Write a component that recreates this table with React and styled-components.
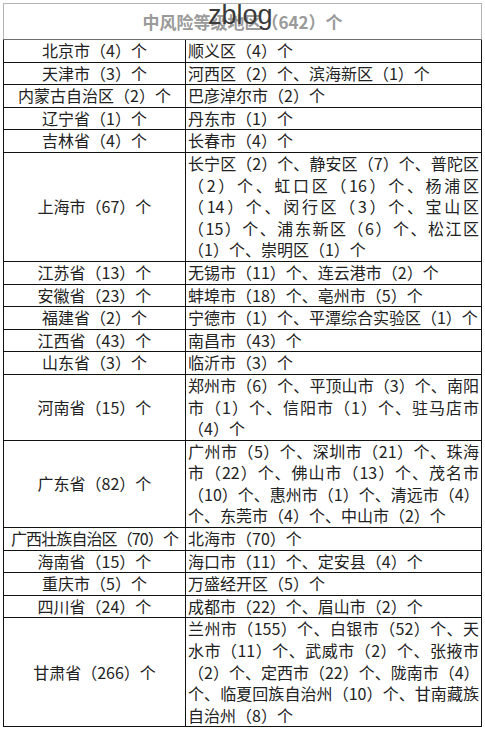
import React from 'react';
import styled, { createGlobalStyle } from 'styled-components';

const List = [
  { name: '北京市（4）个', areas: ['顺义区（4）个'] },
  { name: '天津市（3）个', areas: ['河西区（2）个、滨海新区（1）个'] },
  { name: '内蒙古自治区（2）个', areas: ['巴彦淖尔市（2）个'] },
  { name: '辽宁省（1）个', areas: ['丹东市（1）个'] },
  { name: '吉林省（4）个', areas: ['长春市（4）个'] },
  {
    name: '上海市（67）个',
    areas: [
      '长宁区（2）个、静安区（7）个、普陀区',
      '（2）个、虹口区（16）个、杨浦区',
      '（14）个、闵行区（3）个、宝山区',
      '（15）个、浦东新区（6）个、松江区',
      '（1）个、崇明区（1）个',
    ],
  },
  { name: '江苏省（13）个', areas: ['无锡市（11）个、连云港市（2）个'] },
  { name: '安徽省（23）个', areas: ['蚌埠市（18）个、亳州市（5）个'] },
  { name: '福建省（2）个', areas: ['宁德市（1）个、平潭综合实验区（1）个'] },
  { name: '江西省（43）个', areas: ['南昌市（43）个'] },
  { name: '山东省（3）个', areas: ['临沂市（3）个'] },
  {
    name: '河南省（15）个',
    areas: ['郑州市（6）个、平顶山市（3）个、南阳', '市（1）个、信阳市（1）个、驻马店市', '（4）个'],
  },
  {
    name: '广东省（82）个',
    areas: [
      '广州市（5）个、深圳市（21）个、珠海',
      '市（22）个、佛山市（13）个、茂名市',
      '（10）个、惠州市（1）个、清远市（4）',
      '个、东莞市（4）个、中山市（2）个',
    ],
  },
  { name: '广西壮族自治区（70）个', areas: ['北海市（70）个'], tight: true },
  { name: '海南省（15）个', areas: ['海口市（11）个、定安县（4）个'] },
  { name: '重庆市（5）个', areas: ['万盛经开区（5）个'] },
  { name: '四川省（24）个', areas: ['成都市（22）个、眉山市（2）个'] },
  {
    name: '甘肃省（266）个',
    areas: [
      '兰州市（155）个、白银市（52）个、天',
      '水市（11）个、武威市（2）个、张掖市',
      '（2）个、定西市（22）个、陇南市（4）',
      '个、临夏回族自治州（10）个、甘南藏族',
      '自治州（8）个',
    ],
  },
];

const App = () => {
  return (
    <>
      <GlobalStyle />
      <Page>
        <Watermark>zblog</Watermark>
        <Table>
          <colgroup>
            <col style={{ width: '182px' }} />
            <col />
          </colgroup>
          <thead>
            <tr>
              <HeaderCell colSpan={2}>中风险等级地区（642）个</HeaderCell>
            </tr>
          </thead>
          <tbody>
            {List.map((item) => (
              <tr key={item.name}>
                <NameCell $tight={item.tight}>{item.name}</NameCell>
                <DetailCell>
                  {item.areas.map((line, i) => (
                    <Line key={i} $last={i === item.areas.length - 1}>
                      {line}
                    </Line>
                  ))}
                </DetailCell>
              </tr>
            ))}
          </tbody>
        </Table>
      </Page>
    </>
  );
};

const GlobalStyle = createGlobalStyle`
  body {
    margin: 0;
    background: #ffffff;
    font-family: "Noto Sans CJK SC", "Noto Sans", sans-serif;
    color: #222222;
  }
`;

const Page = styled.div`
  position: relative;
  width: 479px;
  padding: 3px 0 0 3px;
`;

const Watermark = styled.div`
  position: absolute;
  top: 2px;
  left: 208px;
  font-family: "Liberation Sans", Arial, sans-serif;
  font-size: 27px;
  line-height: 27px;
  color: #3a3a3a;
  z-index: 2;
`;

const Table = styled.table`
  width: 479px;
  border-collapse: collapse;
  table-layout: fixed;
  font-size: 16px;
  text-spacing-trim: space-all;
`;

const HeaderCell = styled.th`
  height: 35px;
  padding: 0;
  border: 1px solid #b4b4b4;
  border-bottom-color: #6e6e6e;
  color: #9a9a9a;
  font-size: 17px;
  font-weight: 700;
  text-align: center;
  vertical-align: middle;
`;

const NameCell = styled.td`
  padding: 0;
  border: 1px solid #111111;
  line-height: 21.6px;
  text-align: center;
  vertical-align: middle;
  white-space: nowrap;
  overflow: hidden;
  letter-spacing: ${({ $tight }) => ($tight ? '-0.9px' : '0')};
`;

const DetailCell = styled.td`
  padding: 0 2px 0 2px;
  border: 1px solid #111111;
  line-height: 21.6px;
  vertical-align: middle;
`;

const Line = styled.div`
  white-space: nowrap;
  text-align: ${({ $last }) => ($last ? 'left' : 'justify')};
  text-align-last: ${({ $last }) => ($last ? 'left' : 'justify')};
`;

export default App;
